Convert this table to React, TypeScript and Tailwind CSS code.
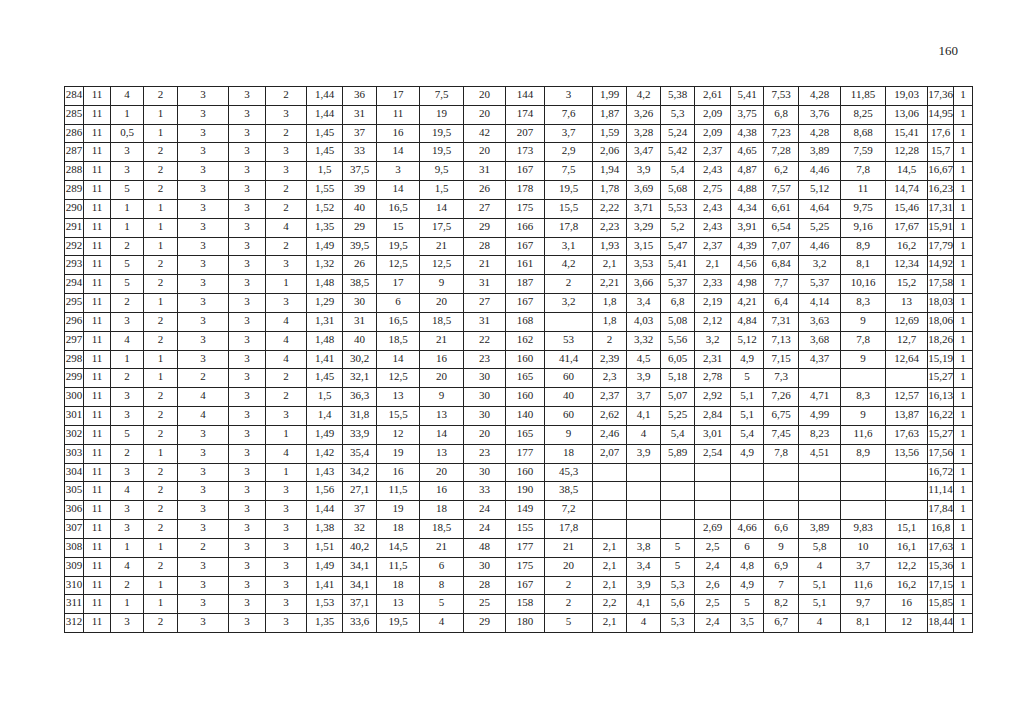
import React from "react";

const rows: string[] = [
  "284|11|4|2|3|3|2|1,44|36|17|7,5|20|144|3|1,99|4,2|5,38|2,61|5,41|7,53|4,28|11,85|19,03|17,36|1",
  "285|11|1|1|3|3|3|1,44|31|11|19|20|174|7,6|1,87|3,26|5,3|2,09|3,75|6,8|3,76|8,25|13,06|14,95|1",
  "286|11|0,5|1|3|3|2|1,45|37|16|19,5|42|207|3,7|1,59|3,28|5,24|2,09|4,38|7,23|4,28|8,68|15,41|17,6|1",
  "287|11|3|2|3|3|3|1,45|33|14|19,5|20|173|2,9|2,06|3,47|5,42|2,37|4,65|7,28|3,89|7,59|12,28|15,7|1",
  "288|11|3|2|3|3|3|1,5|37,5|3|9,5|31|167|7,5|1,94|3,9|5,4|2,43|4,87|6,2|4,46|7,8|14,5|16,67|1",
  "289|11|5|2|3|3|2|1,55|39|14|1,5|26|178|19,5|1,78|3,69|5,68|2,75|4,88|7,57|5,12|11|14,74|16,23|1",
  "290|11|1|1|3|3|2|1,52|40|16,5|14|27|175|15,5|2,22|3,71|5,53|2,43|4,34|6,61|4,64|9,75|15,46|17,31|1",
  "291|11|1|1|3|3|4|1,35|29|15|17,5|29|166|17,8|2,23|3,29|5,2|2,43|3,91|6,54|5,25|9,16|17,67|15,91|1",
  "292|11|2|1|3|3|2|1,49|39,5|19,5|21|28|167|3,1|1,93|3,15|5,47|2,37|4,39|7,07|4,46|8,9|16,2|17,79|1",
  "293|11|5|2|3|3|3|1,32|26|12,5|12,5|21|161|4,2|2,1|3,53|5,41|2,1|4,56|6,84|3,2|8,1|12,34|14,92|1",
  "294|11|5|2|3|3|1|1,48|38,5|17|9|31|187|2|2,21|3,66|5,37|2,33|4,98|7,7|5,37|10,16|15,2|17,58|1",
  "295|11|2|1|3|3|3|1,29|30|6|20|27|167|3,2|1,8|3,4|6,8|2,19|4,21|6,4|4,14|8,3|13|18,03|1",
  "296|11|3|2|3|3|4|1,31|31|16,5|18,5|31|168||1,8|4,03|5,08|2,12|4,84|7,31|3,63|9|12,69|18,06|1",
  "297|11|4|2|3|3|4|1,48|40|18,5|21|22|162|53|2|3,32|5,56|3,2|5,12|7,13|3,68|7,8|12,7|18,26|1",
  "298|11|1|1|3|3|4|1,41|30,2|14|16|23|160|41,4|2,39|4,5|6,05|2,31|4,9|7,15|4,37|9|12,64|15,19|1",
  "299|11|2|1|2|3|2|1,45|32,1|12,5|20|30|165|60|2,3|3,9|5,18|2,78|5|7,3||||15,27|1",
  "300|11|3|2|4|3|2|1,5|36,3|13|9|30|160|40|2,37|3,7|5,07|2,92|5,1|7,26|4,71|8,3|12,57|16,13|1",
  "301|11|3|2|4|3|3|1,4|31,8|15,5|13|30|140|60|2,62|4,1|5,25|2,84|5,1|6,75|4,99|9|13,87|16,22|1",
  "302|11|5|2|3|3|1|1,49|33,9|12|14|20|165|9|2,46|4|5,4|3,01|5,4|7,45|8,23|11,6|17,63|15,27|1",
  "303|11|2|1|3|3|4|1,42|35,4|19|13|23|177|18|2,07|3,9|5,89|2,54|4,9|7,8|4,51|8,9|13,56|17,56|1",
  "304|11|3|2|3|3|1|1,43|34,2|16|20|30|160|45,3||||||||||16,72|1",
  "305|11|4|2|3|3|3|1,56|27,1|11,5|16|33|190|38,5||||||||||11,14|1",
  "306|11|3|2|3|3|3|1,44|37|19|18|24|149|7,2||||||||||17,84|1",
  "307|11|3|2|3|3|3|1,38|32|18|18,5|24|155|17,8||||2,69|4,66|6,6|3,89|9,83|15,1|16,8|1",
  "308|11|1|1|2|3|3|1,51|40,2|14,5|21|48|177|21|2,1|3,8|5|2,5|6|9|5,8|10|16,1|17,63|1",
  "309|11|4|2|3|3|3|1,49|34,1|11,5|6|30|175|20|2,1|3,4|5|2,4|4,8|6,9|4|3,7|12,2|15,36|1",
  "310|11|2|1|3|3|3|1,41|34,1|18|8|28|167|2|2,1|3,9|5,3|2,6|4,9|7|5,1|11,6|16,2|17,15|1",
  "311|11|1|1|3|3|3|1,53|37,1|13|5|25|158|2|2,2|4,1|5,6|2,5|5|8,2|5,1|9,7|16|15,85|1",
  "312|11|3|2|3|3|3|1,35|33,6|19,5|4|29|180|5|2,1|4|5,3|2,4|3,5|6,7|4|8,1|12|18,44|1",
];

export default function App() {
  return (
    <div
      className="w-[1024px] h-[724px] bg-white text-[#1c1c1c] pt-[44px]"
      style={{ fontFamily: '"Liberation Serif", "Times New Roman", serif' }}
    >
      <div className="text-right pr-[66px] text-[13px] leading-[14px]">160</div>
      <div className="mt-[28px] ml-[64px] w-[909px] border-l border-t border-[#222]">
        <div className="grid grid-cols-[19px_27px_33px_34px_51px_37px_41px_36px_34px_43px_44px_42px_39px_48px_34px_34px_34px_36px_33px_35px_42px_45px_42px_26px_19px] auto-rows-[18.83px]">
          {rows.map((r, i) =>
            r.split("|").map((v, j) => (
              <div
                key={`${i}-${j}`}
                className="border-r border-b border-[#222] text-center text-[11px] leading-[12px] pt-[1px] whitespace-nowrap overflow-visible"
              >
                {v}
              </div>
            ))
          )}
        </div>
      </div>
    </div>
  );
}
